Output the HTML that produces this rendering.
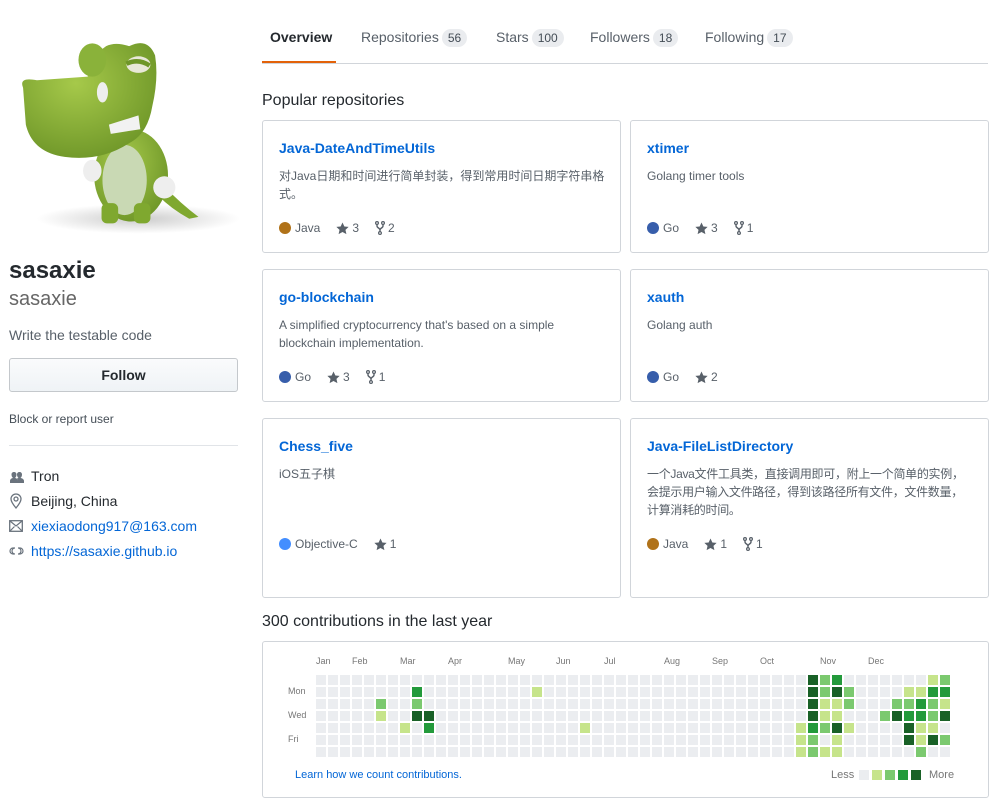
<!DOCTYPE html>
<html><head><meta charset="utf-8">
<style>
*{box-sizing:border-box;margin:0;padding:0}
body{width:998px;height:805px;background:#fff;font-family:"Liberation Sans","Noto Sans CJK SC",sans-serif;color:#24292e;position:relative;overflow:hidden;font-size:14px}
.abs{position:absolute;white-space:nowrap}
a{color:#0366d6;text-decoration:none}
.tab{position:absolute;top:27px;font-size:14px;color:#586069;line-height:20px}
.cnt{display:inline-block;background:#eaecef;border-radius:10px;padding:0 6px;font-size:12px;line-height:18px;color:#444d56;margin-left:3px}
.card{position:absolute;border:1px solid #d1d5da;border-radius:3px;width:359px}
.card .t{position:absolute;left:16px;top:19px;font-size:14px;font-weight:bold;color:#0366d6}
.card .d{position:absolute;left:16px;top:46px;font-size:12px;color:#586069;line-height:18px;width:335px;white-space:normal}
.card .m{position:absolute;left:16px;top:100px;font-size:12px;color:#586069;display:flex;align-items:center}
.card.tall .m{top:118px}
.dot{width:12px;height:12px;border-radius:50%;display:inline-block;margin-right:4px}
.m svg{margin-right:3px;fill:#586069}
.m .g{margin-left:16px;display:flex;align-items:center}
.ml{position:absolute;top:656px;font-size:9px;color:#767676}
.dl{position:absolute;left:288px;font-size:9px;color:#767676}
</style></head><body>

<svg class="abs" style="left:0;top:0" width="240" height="240" viewBox="0 0 260 250">
<defs><radialGradient id="gg" cx="40%" cy="35%" r="70%"><stop offset="0" stop-color="#a6c94a"/><stop offset="1" stop-color="#6e9628"/></radialGradient>
<radialGradient id="sh" cx="50%" cy="50%" r="50%"><stop offset="0" stop-color="#ccc"/><stop offset="1" stop-color="#fff"/></radialGradient></defs>
<ellipse cx="150" cy="232" rx="110" ry="16" fill="url(#sh)"/>
<path d="M150 160 Q175 200 215 230 L205 232 Q165 210 150 175Z" fill="#7fa82f"/>
<ellipse cx="142" cy="185" rx="40" ry="50" fill="url(#gg)"/>
<ellipse cx="135" cy="190" rx="24" ry="38" fill="#c9d9b4"/>
<rect x="110" y="215" width="18" height="22" rx="6" fill="#7fa82f"/>
<rect x="145" y="215" width="18" height="22" rx="6" fill="#7fa82f"/>
<ellipse cx="100" cy="180" rx="10" ry="12" fill="#eee"/>
<ellipse cx="178" cy="198" rx="12" ry="12" fill="#eee"/>
<path d="M25 90 Q20 78 40 82 L95 78 Q100 55 115 45 Q125 40 140 45 Q160 35 168 55 Q172 80 165 110 Q160 140 140 150 Q110 170 70 165 Q35 160 28 130 Z" fill="url(#gg)"/>
<ellipse cx="100" cy="60" rx="15" ry="18" fill="#8ab23a"/>
<ellipse cx="150" cy="65" rx="13" ry="9" fill="#e8e8d8"/>
<path d="M137 64 Q150 58 162 66" stroke="#6e9628" stroke-width="5" fill="none"/>
<ellipse cx="111" cy="95" rx="6" ry="11" fill="#eee"/>
<path d="M118 130 L150 120 L152 135 L120 140Z" fill="#f2f2f2"/>
</svg>

<div class="abs" style="left:9px;top:257px;font-size:24px;font-weight:bold;color:#24292e">sasaxie</div>
<div class="abs" style="left:9px;top:288px;font-size:20px;color:#666;font-weight:300">sasaxie</div>
<div class="abs" style="left:9px;top:327px;font-size:14px;color:#586069">Write the testable code</div>
<div class="abs" style="left:9px;top:358px;width:229px;height:34px;border:1px solid #c4c8cc;border-radius:3px;background:linear-gradient(#fafbfc,#eff3f6);text-align:center;line-height:32px;font-weight:bold;font-size:14px">Follow</div>
<div class="abs" style="left:9px;top:412px;font-size:12px;color:#444d56">Block or report user</div>
<div class="abs" style="left:9px;top:445px;width:229px;height:1px;background:#e1e4e8"></div>

<svg class="abs" style="left:9px;top:470px" width="16" height="14" viewBox="0 0 16 14"><path fill="#6a737d" d="M1 13v-2c0-2 2-3 3-3-1-1-1.5-2-1.5-3.5S3.5 2 5 2s2.5 1 2.5 2.5S7 7 6 8c1 0 3 1 3 3v2zM9 13v-2c0-1-.5-2-1-2.5.5-.3 1-.5 1.5-.5-1-1-1.5-2-1.5-3.5S9 2 10.5 2 13 3 13 4.5 12.5 7 11.5 8c1 0 3.5 1 3.5 3v2z"/></svg>
<div class="abs" style="left:31px;top:468px;font-size:14px">Tron</div>
<svg class="abs" style="left:9px;top:493px" width="14" height="16" viewBox="0 0 14 16"><path fill="none" stroke="#6a737d" stroke-width="1.3" d="M7 15S2 9 2 6a5 5 0 0110 0c0 3-5 9-5 9z"/><circle cx="7" cy="6" r="2" fill="none" stroke="#6a737d" stroke-width="1.3"/></svg>
<div class="abs" style="left:31px;top:493px;font-size:14px">Beijing, China</div>
<svg class="abs" style="left:9px;top:520px" width="14" height="12" viewBox="0 0 14 12"><rect x=".7" y=".7" width="12.6" height="10.6" fill="none" stroke="#6a737d" stroke-width="1.3"/><path d="M1 1l6 5 6-5M1 11l4.5-4.5M13 11L8.5 6.5" fill="none" stroke="#6a737d" stroke-width="1.2"/></svg>
<a class="abs" style="left:31px;top:518px;font-size:14px">xiexiaodong917@163.com</a>
<svg class="abs" style="left:9px;top:545px" width="16" height="12" viewBox="0 0 16 12"><path d="M6 3H4a3 3 0 000 6h1M9 3h2a3 3 0 010 6H9M6 9a3 3 0 010-6M9 3a3 3 0 010 6" fill="none" stroke="#6a737d" stroke-width="1.2"/></svg>
<a class="abs" style="left:31px;top:543px;font-size:14px">https://sasaxie.github.io</a>

<div class="tab" style="left:270px;color:#24292e;font-weight:bold">Overview</div>
<div class="abs" style="left:262px;top:61px;width:74px;height:2px;background:#e36209"></div>
<div class="abs" style="left:262px;top:63px;width:726px;height:1px;background:#d1d5da"></div>
<div class="tab" style="left:361px">Repositories<span class="cnt">56</span></div>
<div class="tab" style="left:496px">Stars<span class="cnt">100</span></div>
<div class="tab" style="left:590px">Followers<span class="cnt">18</span></div>
<div class="tab" style="left:705px">Following<span class="cnt">17</span></div>

<div class="abs" style="left:262px;top:92px;font-size:16px">Popular repositories</div>

<div class="card" style="left:262px;top:120px;height:133px"><div class="t">Java-DateAndTimeUtils</div><div class="d">对Java日期和时间进行简单封装，得到常用时间日期字符串格式。</div>
<div class="m"><span class="dot" style="background:#b07219"></span>Java<span class="g"><svg width="13" height="13" viewBox="0 0 14 14"><path d="M7 .5l2 4.3 4.6.5-3.4 3.2 1 4.6L7 10.8 2.8 13.1l1-4.6L.4 5.3l4.6-.5z"/></svg>3</span><span class="g"><svg width="10" height="14" viewBox="0 0 10 14"><path fill="none" stroke="#586069" stroke-width="1.4" d="M2 3.5v1.5c0 2 3 2 3 4v2M8 3.5v1.5c0 2-3 2-3 4"/><circle cx="2" cy="2" r="1.4" fill="none" stroke="#586069" stroke-width="1.2"/><circle cx="8" cy="2" r="1.4" fill="none" stroke="#586069" stroke-width="1.2"/><circle cx="5" cy="12" r="1.4" fill="none" stroke="#586069" stroke-width="1.2"/></svg>2</span></div></div>

<div class="card" style="left:630px;top:120px;height:133px"><div class="t">xtimer</div><div class="d">Golang timer tools</div>
<div class="m"><span class="dot" style="background:#375eab"></span>Go<span class="g"><svg width="13" height="13" viewBox="0 0 14 14"><path d="M7 .5l2 4.3 4.6.5-3.4 3.2 1 4.6L7 10.8 2.8 13.1l1-4.6L.4 5.3l4.6-.5z"/></svg>3</span><span class="g"><svg width="10" height="14" viewBox="0 0 10 14"><path fill="none" stroke="#586069" stroke-width="1.4" d="M2 3.5v1.5c0 2 3 2 3 4v2M8 3.5v1.5c0 2-3 2-3 4"/><circle cx="2" cy="2" r="1.4" fill="none" stroke="#586069" stroke-width="1.2"/><circle cx="8" cy="2" r="1.4" fill="none" stroke="#586069" stroke-width="1.2"/><circle cx="5" cy="12" r="1.4" fill="none" stroke="#586069" stroke-width="1.2"/></svg>1</span></div></div>

<div class="card" style="left:262px;top:269px;height:133px"><div class="t">go-blockchain</div><div class="d">A simplified cryptocurrency that's based on a simple blockchain implementation.</div>
<div class="m"><span class="dot" style="background:#375eab"></span>Go<span class="g"><svg width="13" height="13" viewBox="0 0 14 14"><path d="M7 .5l2 4.3 4.6.5-3.4 3.2 1 4.6L7 10.8 2.8 13.1l1-4.6L.4 5.3l4.6-.5z"/></svg>3</span><span class="g"><svg width="10" height="14" viewBox="0 0 10 14"><path fill="none" stroke="#586069" stroke-width="1.4" d="M2 3.5v1.5c0 2 3 2 3 4v2M8 3.5v1.5c0 2-3 2-3 4"/><circle cx="2" cy="2" r="1.4" fill="none" stroke="#586069" stroke-width="1.2"/><circle cx="8" cy="2" r="1.4" fill="none" stroke="#586069" stroke-width="1.2"/><circle cx="5" cy="12" r="1.4" fill="none" stroke="#586069" stroke-width="1.2"/></svg>1</span></div></div>

<div class="card" style="left:630px;top:269px;height:133px"><div class="t">xauth</div><div class="d">Golang auth</div>
<div class="m"><span class="dot" style="background:#375eab"></span>Go<span class="g"><svg width="13" height="13" viewBox="0 0 14 14"><path d="M7 .5l2 4.3 4.6.5-3.4 3.2 1 4.6L7 10.8 2.8 13.1l1-4.6L.4 5.3l4.6-.5z"/></svg>2</span></div></div>

<div class="card tall" style="left:262px;top:418px;height:180px"><div class="t">Chess_five</div><div class="d">iOS五子棋</div>
<div class="m"><span class="dot" style="background:#438eff"></span>Objective-C<span class="g"><svg width="13" height="13" viewBox="0 0 14 14"><path d="M7 .5l2 4.3 4.6.5-3.4 3.2 1 4.6L7 10.8 2.8 13.1l1-4.6L.4 5.3l4.6-.5z"/></svg>1</span></div></div>

<div class="card tall" style="left:630px;top:418px;height:180px"><div class="t">Java-FileListDirectory</div><div class="d" style="white-space:nowrap;letter-spacing:-0.3px">一个Java文件工具类，直接调用即可，附上一个简单的实例，<br>会提示用户输入文件路径，得到该路径所有文件，文件数量，<br>计算消耗的时间。</div>
<div class="m"><span class="dot" style="background:#b07219"></span>Java<span class="g"><svg width="13" height="13" viewBox="0 0 14 14"><path d="M7 .5l2 4.3 4.6.5-3.4 3.2 1 4.6L7 10.8 2.8 13.1l1-4.6L.4 5.3l4.6-.5z"/></svg>1</span><span class="g"><svg width="10" height="14" viewBox="0 0 10 14"><path fill="none" stroke="#586069" stroke-width="1.4" d="M2 3.5v1.5c0 2 3 2 3 4v2M8 3.5v1.5c0 2-3 2-3 4"/><circle cx="2" cy="2" r="1.4" fill="none" stroke="#586069" stroke-width="1.2"/><circle cx="8" cy="2" r="1.4" fill="none" stroke="#586069" stroke-width="1.2"/><circle cx="5" cy="12" r="1.4" fill="none" stroke="#586069" stroke-width="1.2"/></svg>1</span></div></div>

<div class="abs" style="left:262px;top:613px;font-size:16px">300 contributions in the last year</div>
<div class="abs" style="left:262px;top:641px;width:727px;height:157px;border:1px solid #d1d5da;border-radius:3px"></div>
<div class="ml" style="left:316px">Jan</div><div class="ml" style="left:352px">Feb</div><div class="ml" style="left:400px">Mar</div><div class="ml" style="left:448px">Apr</div><div class="ml" style="left:508px">May</div><div class="ml" style="left:556px">Jun</div><div class="ml" style="left:604px">Jul</div><div class="ml" style="left:664px">Aug</div><div class="ml" style="left:712px">Sep</div><div class="ml" style="left:760px">Oct</div><div class="ml" style="left:820px">Nov</div><div class="ml" style="left:868px">Dec</div>
<div class="dl" style="top:686px">Mon</div><div class="dl" style="top:710px">Wed</div><div class="dl" style="top:734px">Fri</div>
<svg id="g" class="abs" style="left:316px;top:675px" width="640" height="84"></svg>
<a class="abs" style="left:295px;top:769px;font-size:11px">Learn how we count contributions.</a>
<div class="abs" style="left:831px;top:769px;font-size:11px;color:#767676">Less</div>
<div class="abs" style="left:859px;top:770px;width:10px;height:10px;background:#ebedf0"></div>
<div class="abs" style="left:872px;top:770px;width:10px;height:10px;background:#c6e48b"></div>
<div class="abs" style="left:885px;top:770px;width:10px;height:10px;background:#7bc96f"></div>
<div class="abs" style="left:898px;top:770px;width:10px;height:10px;background:#239a3b"></div>
<div class="abs" style="left:911px;top:770px;width:10px;height:10px;background:#196127"></div>
<div class="abs" style="left:929px;top:769px;font-size:11px;color:#767676">More</div>

<script>
var C=['#ebedf0','#c6e48b','#7bc96f','#239a3b','#196127'];
var m={
'0,41':4,'0,42':2,'0,43':3,'0,51':1,'0,52':2,
'1,8':3,'1,18':1,'1,41':4,'1,42':2,'1,43':4,'1,44':2,'1,49':1,'1,50':1,'1,51':3,'1,52':3,
'2,5':2,'2,8':2,'2,41':4,'2,42':1,'2,43':1,'2,44':2,'2,48':2,'2,49':2,'2,50':3,'2,51':2,'2,52':1,
'3,5':1,'3,8':4,'3,9':4,'3,41':4,'3,42':1,'3,43':1,'3,47':2,'3,48':4,'3,49':3,'3,50':3,'3,51':2,'3,52':4,
'4,7':1,'4,9':3,'4,22':1,'4,40':1,'4,41':3,'4,42':2,'4,43':4,'4,44':1,'4,49':4,'4,50':1,'4,51':1,
'5,40':1,'5,41':2,'5,43':1,'5,49':4,'5,50':1,'5,51':4,'5,52':2,
'6,40':1,'6,41':2,'6,42':1,'6,43':1,'6,50':2};
var s='';
for(var c=0;c<53;c++)for(var r=0;r<7;r++){var v=m[r+','+c]||0;s+='<rect x="'+c*12+'" y="'+r*12+'" width="10" height="10" fill="'+C[v]+'"/>';}
document.getElementById('g').innerHTML=s;
</script>
</body></html>
